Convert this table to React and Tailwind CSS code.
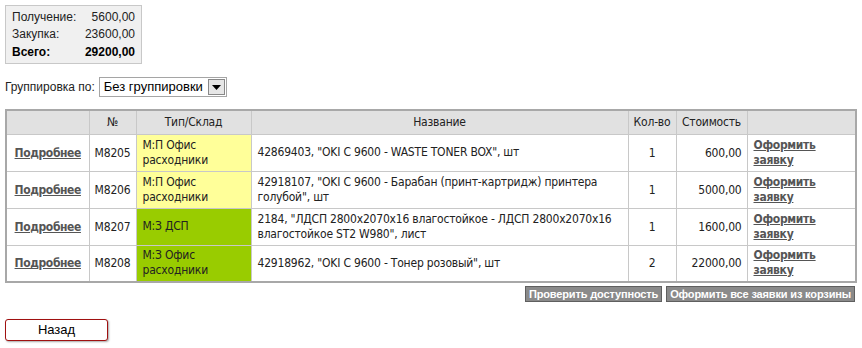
import React from "react";

const rows = [
  {
    id: "M8205",
    store: ["М:П Офис", "расходники"],
    color: "bg-[#ffff99]",
    name: ["42869403, \"OKI C 9600 - WASTE TONER BOX\", шт"],
    qty: 1,
    cost: "600,00",
  },
  {
    id: "M8206",
    store: ["М:П Офис", "расходники"],
    color: "bg-[#ffff99]",
    name: ["42918107, \"OKI C 9600 - Барабан (принт-картридж) принтера", "голубой\", шт"],
    qty: 1,
    cost: "5000,00",
  },
  {
    id: "M8207",
    store: ["М:З ДСП"],
    color: "bg-[#99cc00]",
    name: ["2184, \"ЛДСП 2800x2070x16 влагостойкое - ЛДСП 2800x2070x16", "влагостойкое ST2 W980\", лист"],
    qty: 1,
    cost: "1600,00",
  },
  {
    id: "M8208",
    store: ["М:З Офис", "расходники"],
    color: "bg-[#99cc00]",
    name: ["42918962, \"OKI C 9600 - Тонер розовый\", шт"],
    qty: 2,
    cost: "22000,00",
  },
];

const columnNames = ["", "№", "Тип/Склад", "Название", "Кол-во", "Стоимость", ""];

const Lines = ({ lines }) =>
  lines.map((line, i) => (
    <span key={i} className="block whitespace-nowrap">
      {line}
    </span>
  ));

const App = () => {
  const renderHeader = () => (
    <tr className="bg-[#e1e1e1] h-[24px]">
      {columnNames.map((name, index) => (
        <th key={index} className="border border-[#c8c8c8] font-normal text-center px-[2px] whitespace-nowrap">
          {name}
        </th>
      ))}
    </tr>
  );

  const renderRow = (row, index) => (
    <tr key={index} className="h-[37px]">
      <td className="border border-[#c8c8c8] px-[6px] text-center">
        <a href="#" className="font-bold text-[#555] underline tracking-[-0.4px]">Подробнее</a>
      </td>
      <td className="border border-[#c8c8c8] px-[4px] text-center">{row.id}</td>
      <td className={`border border-[#c8c8c8] px-[6px] leading-[15px] ${row.color}`}>
        <Lines lines={row.store} />
      </td>
      <td className="border border-[#c8c8c8] px-[6px] leading-[15px]">
        <Lines lines={row.name} />
      </td>
      <td className="border border-[#c8c8c8] px-[2px] text-center">{row.qty}</td>
      <td className="border border-[#c8c8c8] px-[5px] text-right">{row.cost}</td>
      <td className="border border-[#c8c8c8] px-[6px] leading-[15px]">
        <a href="#" className="font-bold text-[#555] underline tracking-[-0.3px]">
          Оформить
          <br />
          заявку
        </a>
      </td>
    </tr>
  );

  return (
    <div className="bg-white min-h-[348px] w-[862px] px-[5px] pt-[5px] font-['Liberation_Sans',Arial,sans-serif] text-[12px] text-[#222]">
      {/* итоги */}
      <div className="w-[137px] border border-[#c8c8c8] bg-[#f0f0f0] px-[6px] py-[2px]">
        <div className="flex justify-between h-[17px] items-center">
          <span>Получение:</span>
          <span>5600,00</span>
        </div>
        <div className="flex justify-between h-[18px] items-center">
          <span>Закупка:</span>
          <span>23600,00</span>
        </div>
        <div className="flex justify-between h-[18px] items-center font-bold text-black">
          <span>Всего:</span>
          <span>29200,00</span>
        </div>
      </div>

      {/* группировка */}
      <div className="flex items-center mt-[13px] h-[20px]">
        <span className="mr-[4px]">Группировка по:</span>
        <div className="flex items-center h-[20px] w-[128px] border border-[#a5a5a5] bg-white">
          <span className="flex-1 pl-[4px] text-[13px] text-black">Без группировки</span>
          <span className="flex items-center justify-center w-[17px] h-[16px] mr-[1px] border border-[#888] bg-[#e6e6e6]">
            <svg width="9" height="5" viewBox="0 0 9 5">
              <polygon points="0,0 9,0 4.5,5" fill="#000" />
            </svg>
          </span>
        </div>
      </div>

      {/* таблица */}
      <table className="mt-[12px] w-[850px] table-fixed border-collapse border-2 border-[#a8a8a8] font-['DejaVu_Sans_Condensed','DejaVu_Sans',Tahoma,sans-serif] text-[12px] tracking-[-0.2px] text-[#222]">
        <colgroup>
          <col className="w-[83px]" />
          <col className="w-[47px]" />
          <col className="w-[115px]" />
          <col className="w-[377px]" />
          <col className="w-[48px]" />
          <col className="w-[71px]" />
          <col className="w-[109px]" />
        </colgroup>
        <thead>{renderHeader()}</thead>
        <tbody>{rows.map((row, index) => renderRow(row, index))}</tbody>
      </table>

      {/* кнопки корзины */}
      <div className="flex justify-end gap-[4px] w-[850px] mt-[3px]">
        <button className="h-[16px] px-[3px] bg-[#8a8a8a] border border-[#5f5f5f] text-white font-bold text-[11px] leading-[14px] tracking-[-0.15px]">
          Проверить доступность
        </button>
        <button className="h-[16px] px-[3px] bg-[#8a8a8a] border border-[#5f5f5f] text-white font-bold text-[11px] leading-[14px] tracking-[-0.15px]">
          Оформить все заявки из корзины
        </button>
      </div>

      <button className="block mt-[17px] w-[103px] h-[22px] bg-white border border-[#a01010] rounded-[3px] shadow-[1px_1px_2px_rgba(0,0,0,0.35)] text-[13px] text-black">
        Назад
      </button>
    </div>
  );
};

export default App;
